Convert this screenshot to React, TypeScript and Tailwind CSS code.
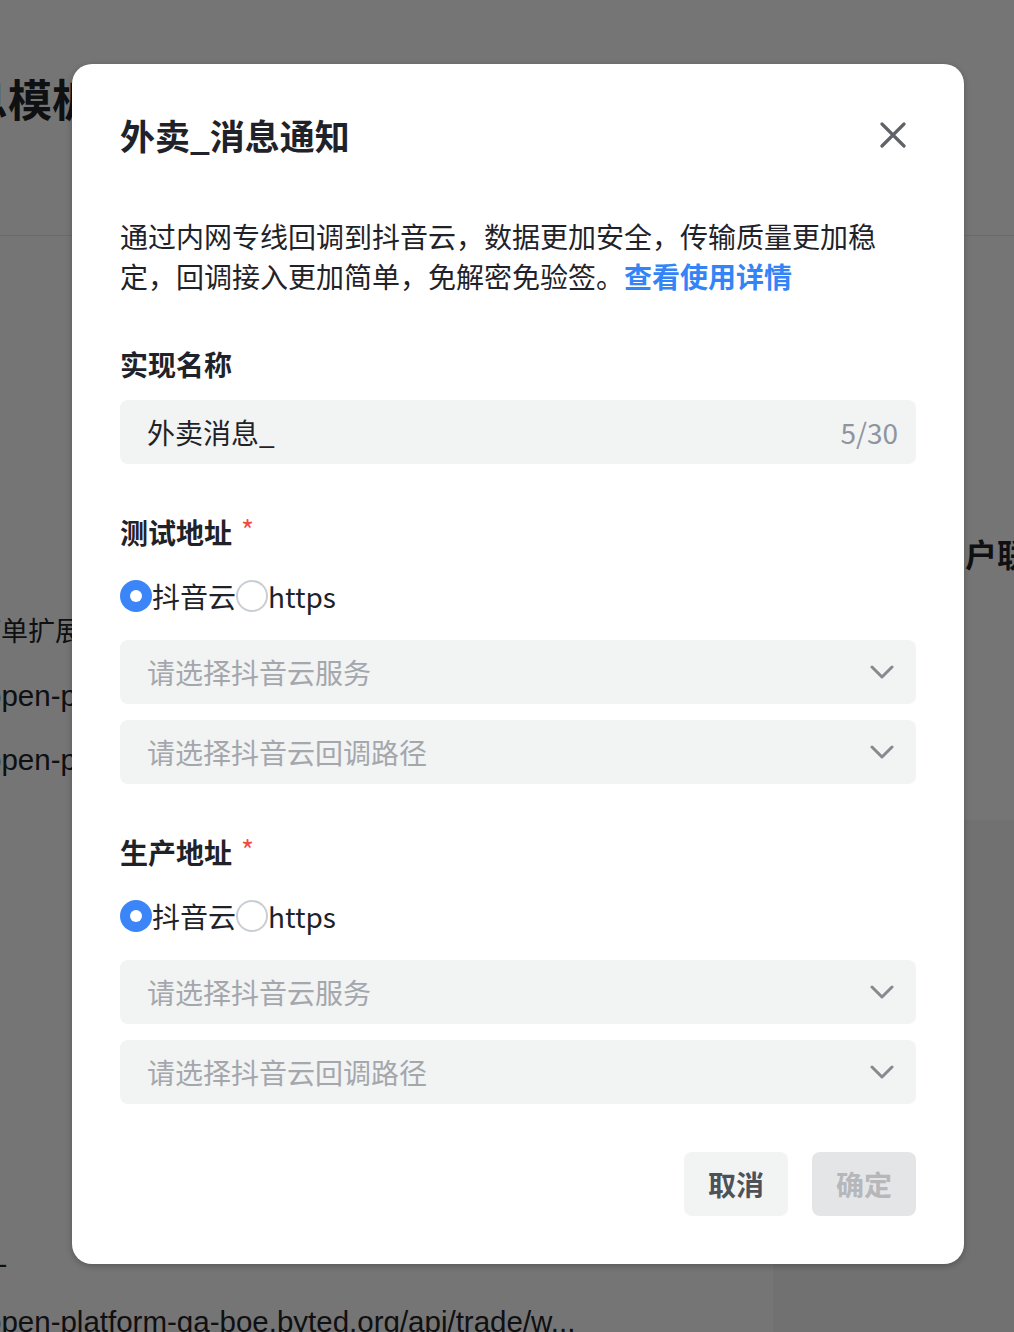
import React from "react";

const font = { fontFamily: '"Noto Sans CJK SC", "Noto Sans", sans-serif' };
const bgFont = { fontFamily: '"Liberation Sans", "Noto Sans CJK SC", sans-serif' };

const Chevron = () => (
  <svg width="24" height="14" viewBox="0 0 24 14" fill="none">
    <path d="M2 2 L12 12 L22 2" stroke="#86898e" strokeWidth="3" strokeLinecap="round" strokeLinejoin="round" />
  </svg>
);

const CloseIcon = () => (
  <svg width="26" height="26" viewBox="0 0 26 26" fill="none">
    <path d="M2 2 L24 24 M24 2 L2 24" stroke="#5f6368" strokeWidth="3.2" strokeLinecap="round" />
  </svg>
);

const Label = ({ text, required }: { text: string; required?: boolean }) => (
  <div className="flex items-center h-10 text-[28px] font-bold text-[#1f2329] leading-10">
    {text}
    {required && <span className="ml-[9px] mt-[-6px] text-[28px] font-normal text-[#f54a45]">*</span>}
  </div>
);

const RadioRow = () => (
  <div className="flex items-center h-10 mt-6 text-[28px] text-[#1f2329]">
    <span className="w-8 h-8 rounded-full bg-[#3c85f8] flex items-center justify-center">
      <span className="w-3 h-3 rounded-full bg-white" />
    </span>
    <span>抖音云</span>
    <span className="w-8 h-8 rounded-full border-2 border-[#c9cdd4] bg-white" />
    <span>https</span>
  </div>
);

const SelectBox = ({ placeholder, className }: { placeholder: string; className?: string }) => (
  <div className={`flex items-center justify-between h-16 rounded-lg bg-[#f2f3f3] pl-[27px] pr-[22px] ${className ?? ""}`}>
    <span className="text-[28px] text-[#a4a7ac]">{placeholder}</span>
    <Chevron />
  </div>
);

const AddressField = ({ title }: { title: string }) => (
  <div className="mt-12">
    <Label text={title} required />
    <RadioRow />
    <SelectBox placeholder="请选择抖音云服务" className="mt-6" />
    <SelectBox placeholder="请选择抖音云回调路径" className="mt-4" />
  </div>
);

export default function App() {
  return (
    <div className="relative w-[1014px] h-[1332px] overflow-hidden bg-[#f6f6f8]" style={font}>
      {/* page behind the mask */}
      <div className="h-[236px] bg-white border-b border-[#e8e8ea]">
        <div className="pt-[72px] ml-[-80px] text-[44px] font-bold text-[#1f2329] leading-[52px] whitespace-nowrap">
          消息模板
        </div>
      </div>
      <div className="flex">
        <div className="w-[773px] h-[1096px] bg-white pt-[376px] text-[#1f2329] whitespace-nowrap" style={bgFont}>
          <div className="ml-[-26px] text-[27px] leading-10">订单扩展字段</div>
          <div className="ml-[-15px] mt-6 text-[29.5px] leading-10">open-platform-ga-boe.byted.org</div>
          <div className="ml-[-15px] mt-6 text-[29.5px] leading-10">open-platform-ga-boe.byted.org</div>
          <div className="ml-[-2px] mt-[476px] text-[28px] leading-4">-</div>
          <div className="ml-[-15px] mt-[30px] text-[29.5px] leading-10">
            open-platform-ga-boe.byted.org/api/trade/w...
          </div>
        </div>
        <div className="flex-1 overflow-hidden">
          <div className="mt-[-21px] h-[605px] bg-white pt-[318px] pl-[192px] whitespace-nowrap">
            <span className="ml-[-32px] text-[32px] font-bold text-[#1f2329] leading-10">用户联系方式</span>
          </div>
        </div>
      </div>

      {/* mask */}
      <div className="absolute inset-0 bg-black/[0.54]" />

      {/* modal */}
      <div className="absolute left-[72px] top-[64px] w-[892px] rounded-[20px] bg-white px-12 pt-[47px] pb-12 shadow-[0_2px_6px_rgba(0,0,0,0.25)]">
        <div className="flex items-center justify-between h-12">
          <h2 className="text-[35px] font-bold text-[#1f2329] leading-[48px]">外卖_消息通知</h2>
          <span className="mr-[10px] flex items-center">
            <CloseIcon />
          </span>
        </div>

        <p className="mt-[57px] text-[28px] leading-10 text-[#1f2329] pr-5">
          通过内网专线回调到抖音云，数据更加安全，传输质量更加稳定，回调接入更加简单，免解密免验签。
          <span className="text-[#3384f7] font-bold">查看使用详情</span>
        </p>

        <div className="mt-12">
          <Label text="实现名称" />
          <div className="mt-4 flex items-center justify-between h-16 rounded-lg bg-[#f2f3f3] pl-[27px] pr-[18px]">
            <span className="text-[28px] text-[#1f2329]">外卖消息_</span>
            <span className="text-[28px] text-[#8f959e]">5/30</span>
          </div>
        </div>

        <AddressField title="测试地址" />
        <AddressField title="生产地址" />

        <div className="mt-12 flex justify-end gap-6">
          <button className="w-[104px] h-16 rounded-lg bg-[#f2f3f3] text-[28px] font-bold text-[#4e5258]">
            取消
          </button>
          <button className="w-[104px] h-16 rounded-lg bg-[#e4e5e7] text-[28px] font-bold text-[#b5b7bb]">
            确定
          </button>
        </div>
      </div>
    </div>
  );
}
